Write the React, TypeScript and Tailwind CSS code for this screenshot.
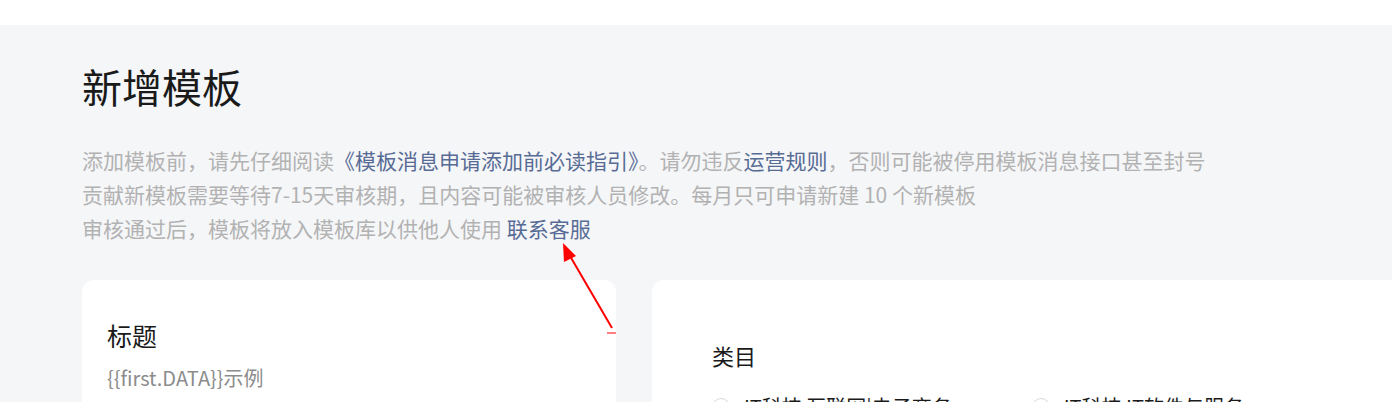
import React from "react";

export default function App() {
  const font = { fontFamily: '"Noto Sans CJK SC", "Noto Sans", sans-serif' };
  return (
    <div className="relative h-[402px] w-[1392px] overflow-hidden bg-[#f5f6f8]" style={font}>
      <div className="h-[25px] bg-white" />
      <div className="pl-[82px]">
        <h1 className="mt-[37px] text-[40px] leading-[48px] font-normal text-[#1a1a1a]">新增模板</h1>
        <div className="mt-[33px] text-[21px] leading-[34px] text-[#b2b2b2]">
          <p>
            添加模板前，请先仔细阅读<span className="text-[#576b95]">《模板消息申请添加前必读指引》</span>。请勿违反<span className="text-[#576b95]">运营规则</span>，否则可能被停用模板消息接口甚至封号
          </p>
          <p>贡献新模板需要等待7-15天审核期，且内容可能被审核人员修改。每月只可申请新建 10 个新模板</p>
          <p>
            审核通过后，模板将放入模板库以供他人使用 <span className="text-[#576b95]">联系客服</span>
          </p>
        </div>
        <div className="mt-[35px] flex gap-[36px]">
          <div className="h-[200px] w-[534px] shrink-0 rounded-[12px] bg-white px-[25px] pt-[37px]">
            <div className="text-[25px] leading-[36px] text-[#1a1a1a]">标题</div>
            <div className="mt-[11px] text-[20px] leading-[28px] text-[#8c8c8c]">{"{{first.DATA}}示例"}</div>
          </div>
          <div className="h-[200px] flex-1 rounded-l-[12px] bg-white pl-[60px] pt-[60px]">
            <div className="text-[22px] leading-[30px] text-[#1a1a1a]">类目</div>
            <div className="mt-[23px] flex items-center gap-[80px] text-[20px] leading-[28px] text-[#1a1a1a]">
              <label className="flex items-center gap-[14px]">
                <span className="h-[18px] w-[18px] rounded-full border border-[#d9d9d9]" />
                <span>IT科技 互联网|电子商务</span>
              </label>
              <label className="flex items-center gap-[14px]">
                <span className="h-[18px] w-[18px] rounded-full border border-[#d9d9d9]" />
                <span>IT科技 IT软件与服务</span>
              </label>
            </div>
          </div>
        </div>
      </div>
      <svg className="pointer-events-none absolute left-0 top-0" width="1392" height="402">
        <line x1="612" y1="328" x2="570" y2="256" stroke="#ff0000" strokeWidth="2" />
        <polygon points="563,243 576,256 564,262" fill="#ff0000" />
        <line x1="607" y1="333" x2="616" y2="333" stroke="#ff0000" strokeWidth="1" />
      </svg>
    </div>
  );
}
